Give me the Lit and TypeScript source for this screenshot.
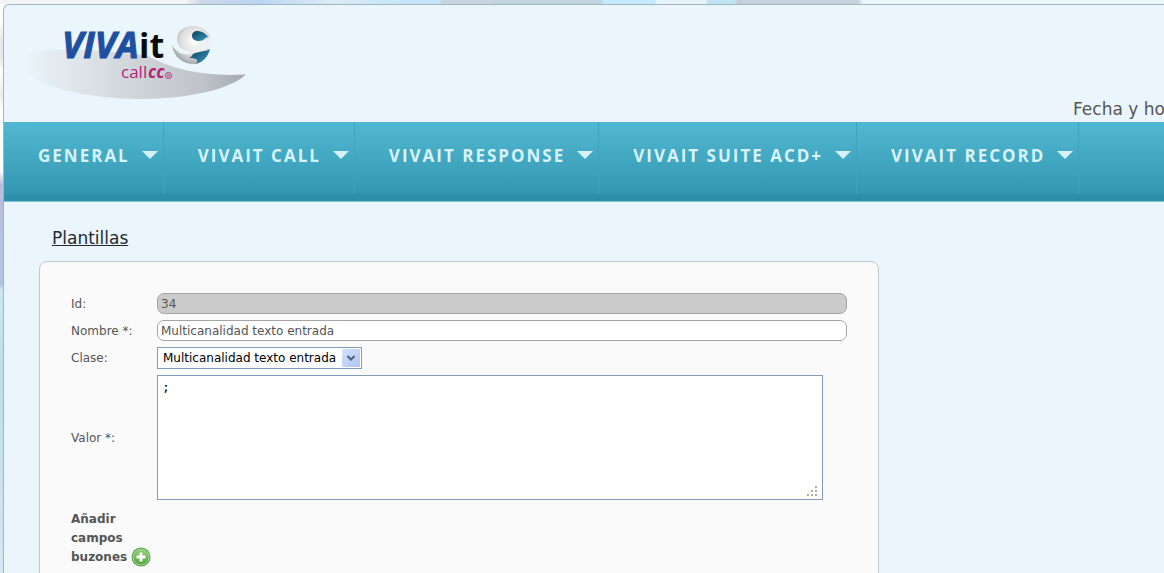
import { LitElement, html, css } from "lit";
import { customElement } from "lit/decorators.js";

@customElement("vivait-logo")
class VivaitLogo extends LitElement {
  static styles = css`
    :host { display: block; }
    svg { display: block; }
    .viva { font: italic 700 36px "Open Sans", sans-serif; fill: #1f4fa0; stroke: #1f4fa0; }
    .it { font: 700 34px "Open Sans", sans-serif; fill: #0a0a0a; }
    .call { font: 400 17px "Open Sans", sans-serif; fill: #b3247c; }
    .cc { font: italic 700 17px "Open Sans", sans-serif; fill: #b3247c; }
  `;
  render() {
    return html`
      <svg width="224" height="80" viewBox="26 22 224 80" role="img" aria-label="VIVAit call cc">
        <defs>
          <linearGradient id="swoosh" x1="0" x2="1">
            <stop offset="0" stop-color="#d8dde2" stop-opacity="0" />
            <stop offset=".12" stop-color="#dce1e6" stop-opacity=".5" />
            <stop offset=".4" stop-color="#d5dade" />
            <stop offset=".8" stop-color="#c0c4ca" />
            <stop offset="1" stop-color="#a4a8b0" />
          </linearGradient>
          <radialGradient id="ball" cx=".6" cy=".4" r=".75">
            <stop offset="0" stop-color="#ffffff" />
            <stop offset=".5" stop-color="#dededf" />
            <stop offset="1" stop-color="#85888b" />
          </radialGradient>
          <linearGradient id="sea" x1="0" x2="1" y2="1">
            <stop offset="0" stop-color="#0c3e58" />
            <stop offset="1" stop-color="#3a9cc4" />
          </linearGradient>
        </defs>
        <path fill="url(#swoosh)" d="M26 54 Q60 44 148 56 C170 68 202 77 246 74.500 C232 87 202 96 158 98.500 C98 101 50 91 26 72Z" />
        <text class="viva" x="62" y="58">VIVA</text>
        <text class="it" x="139" y="58">it</text>
        <text class="call" x="121" y="78">call</text>
        <text class="cc" x="148" y="78">cc</text>
        <g fill="none" stroke="#b3247c"><circle cx="168.500" cy="75.500" r="3" /><circle cx="168.500" cy="75.500" r="1" /></g>
        <path fill="url(#ball)" d="M172 45 C174 58 184 65 196 64 C200 62 203 60 205 56 L211 42 C211 33 204 26 194 26 C184 26 177 31 177 39 C177 47 184 51 193 52 C186 57 176 53 172 45Z" />
        <path fill="url(#sea)" d="M192 36 C192 31 197 30 202 32 C205 33 207 35 208 37 C204 38 204 41 199 41 C195 41 192 39 192 36Z" />
        <path fill="#eef1f3" d="M199 42 C204 41 206 39 211 38 C212 44 210 48 204 50 L192 53 C196 50 198 46 199 42Z" />
        <path fill="url(#sea)" d="M193 54 C199 51 205 52 210 49 C208 57 203 62 196 64 C199 60 197 58 189 58 C191 57 192 56 193 54Z" />
      </svg>
    `;
  }
}

@customElement("main-menu")
class MainMenu extends LitElement {
  static styles = css`
    :host { display: block; }
    .bar {
      display: flex;
      height: 72px;
      border-bottom: 7px solid #2f8fab;
      box-shadow: 0 1px 0 #7cc6d6;
      margin-bottom: 1px;
      background: linear-gradient(#52b8d2, #44a9c3 45%, #3497b2);
      overflow: hidden;
    }
    .item {
      flex: none;
      display: flex;
      align-items: flex-start;
      justify-content: space-between;
      gap: 12px;
      box-sizing: border-box;
      padding: 20px 5px 0 34px;
      border: 0;
      border-right: 1px solid #3fa3bc;
      background: none;
      color: #d7f3fb;
      font: 700 17px/27px "Open Sans", sans-serif;
      letter-spacing: 2px;
      white-space: nowrap;
    }
    .arrow { width: 16px; height: 8px; margin-top: 9px; fill: #d7f1fa; }
  `;
  items = ["GENERAL", "VIVAIT CALL", "VIVAIT RESPONSE", "VIVAIT SUITE ACD+", "VIVAIT RECORD"];
  render() {
    return html`<nav class="bar">
      ${this.items.map(
        (t) => html`<button class="item" type="button">${t}<svg class="arrow" viewBox="0 0 16 8"><path d="M0 0H16L8 8Z" /></svg></button>`
      )}
    </nav>`;
  }
}

@customElement("template-form")
class TemplateForm extends LitElement {
  static styles = css`
    :host { display: block; }
    .form {
      display: grid;
      grid-template-columns: 80px minmax(0, 1fr);
      gap: 6px;
      align-items: center;
      box-sizing: border-box;
      max-width: 840px;
      padding: 31px;
      border: 1px solid #bfcad0;
      border-radius: 8px;
      background: #fafafa;
      color: #555;
      font: 12px/18px "DejaVu Sans", Verdana, sans-serif;
    }
    .field {
      box-sizing: border-box;
      width: 100%;
      height: 21px;
      padding: 0 3px;
      border: 1px solid #a5a5a5;
      border-radius: 7px;
      background: #fff;
      color: #555;
      font: inherit;
    }
    .field[readonly] { background: #cbcbcb; }
    .pick { position: relative; justify-self: start; display: grid; }
    .select {
      appearance: none;
      box-sizing: border-box;
      width: 205px;
      height: 22px;
      padding: 0 24px 0 5px;
      border: 1px solid #7f9db9;
      border-radius: 0;
      background: #fff;
      color: #000;
      font: inherit;
    }
    .drop { position: absolute; right: 2px; top: 2px; pointer-events: none; }
    .area { position: relative; max-width: 666px; display: grid; }
    .text {
      box-sizing: border-box;
      width: 100%;
      height: 125px;
      padding: 2px 4px;
      border: 1px solid #7f9db9;
      background: #fff;
      color: #000;
      font: 13px/18px "DejaVu Sans Mono", monospace;
      resize: none;
    }
    .grip { position: absolute; right: 5px; bottom: 3px; fill: #b0ad9a; }
    .add { display: flex; align-items: flex-end; gap: 4px; padding-top: 4px; font-weight: 700; line-height: 19px; }
    .plus { flex: none; display: block; padding: 0; border: 0; background: none; }
    .plus svg { display: block; }
  `;
  render() {
    return html`<form class="form">
      <label for="id">Id:</label>
      <input class="field" id="id" readonly value="34" />
      <label for="name">Nombre *:</label>
      <input class="field" id="name" value="Multicanalidad texto entrada" />
      <label for="kind">Clase:</label>
      <div class="pick">
        <select class="select" id="kind"><option>Multicanalidad texto entrada</option></select>
        <svg class="drop" width="18" height="18" viewBox="0 0 18 18">
          <defs><linearGradient id="xp" x2="1" y2="1"><stop stop-color="#d5e2fd" /><stop offset="1" stop-color="#adc4f3" /></linearGradient></defs>
          <rect width="18" height="18" rx="1" fill="url(#xp)" />
          <path d="M5.500 7L9 10.500L12.500 7" fill="none" stroke="#4d6185" stroke-width="2" />
        </svg>
      </div>
      <label for="value">Valor *:</label>
      <div class="area">
        <textarea class="text" id="value" .value=${";"}></textarea>
        <svg class="grip" width="12" height="12" viewBox="0 0 12 12">
          <path d="M9 1h2v2h-2zM9 5h2v2h-2zM5 5h2v2h-2zM9 9h2v2h-2zM5 9h2v2h-2zM1 9h2v2h-2z" />
        </svg>
      </div>
      <div class="add">
        <span>Añadir campos buzones</span>
        <button class="plus" type="button" aria-label="Añadir">
          <svg width="20" height="20" viewBox="0 0 20 20">
            <defs><linearGradient id="green" x2="0" y2="1"><stop stop-color="#9ad07c" /><stop offset="1" stop-color="#4ba53c" /></linearGradient></defs>
            <circle cx="10" cy="10" r="9.500" fill="#5a9f4c" />
            <circle cx="10" cy="10" r="8" fill="url(#green)" stroke="#a6d596" />
            <path d="M8.500 5.500h3v3h3v3h-3v3h-3v-3h-3v-3h3z" fill="#fff" />
          </svg>
        </button>
      </div>
    </form>`;
  }
}

@customElement("app-root")
class AppRoot extends LitElement {
  static styles = css`
    :host {
      display: block;
      box-sizing: border-box;
      height: 100vh;
      overflow: hidden;
      padding: 4px 0 0 3px;
      background:
        linear-gradient(90deg, #f3f4f6 0 185px, #cfd8e8 200px, #bcd4f3 260px, #dceaf5 330px, #c5e6f8 400px 440px, #c8d4de 441px 490px, #bfd2dd 500px 600px, #c3ebfb 604px 654px, #e6f4fa 658px 705px, #c0e3f4 708px 734px, #c4d0da 738px 858px, #ecf7fb 863px) 0 0 / 100% 4px no-repeat,
        linear-gradient(#fff 20px, #e8e8ea 40px 60px, #fff 70px, #ededee 95px, #fff 110px 170px, #b9bddd 185px, #b0c6e3 285px, #cfe8f2 290px, #bfdcea 370px, #d5e8f3 100%);
    }
    .page {
      min-height: 100vh;
      border: solid #9db7c3;
      border-width: 1px 0 0 1px;
      border-radius: 6px 0 0 0;
      background: #eaf6fb;
    }
    .head {
      display: grid;
      grid-template-columns: minmax(0, 1fr) 91px;
      align-items: end;
      height: 117px;
      overflow: hidden;
    }
    .logo { margin: 0 0 20px 22px; }
    .date {
      margin: 0;
      color: #555;
      font: 17px/26px "DejaVu Sans", Verdana, sans-serif;
      white-space: nowrap;
    }
    .main { padding: 24px 35px; }
    .title {
      margin: 0 0 11px 13px;
      color: #222b33;
      font: 17px/24px "DejaVu Sans", Verdana, sans-serif;
      text-decoration: underline;
    }
  `;
  render() {
    return html`<div class="page">
      <header class="head">
        <vivait-logo class="logo"></vivait-logo>
        <p class="date">Fecha y hora:</p>
      </header>
      <main-menu></main-menu>
      <main class="main">
        <h1 class="title">Plantillas</h1>
        <template-form></template-form>
      </main>
    </div>`;
  }
}
